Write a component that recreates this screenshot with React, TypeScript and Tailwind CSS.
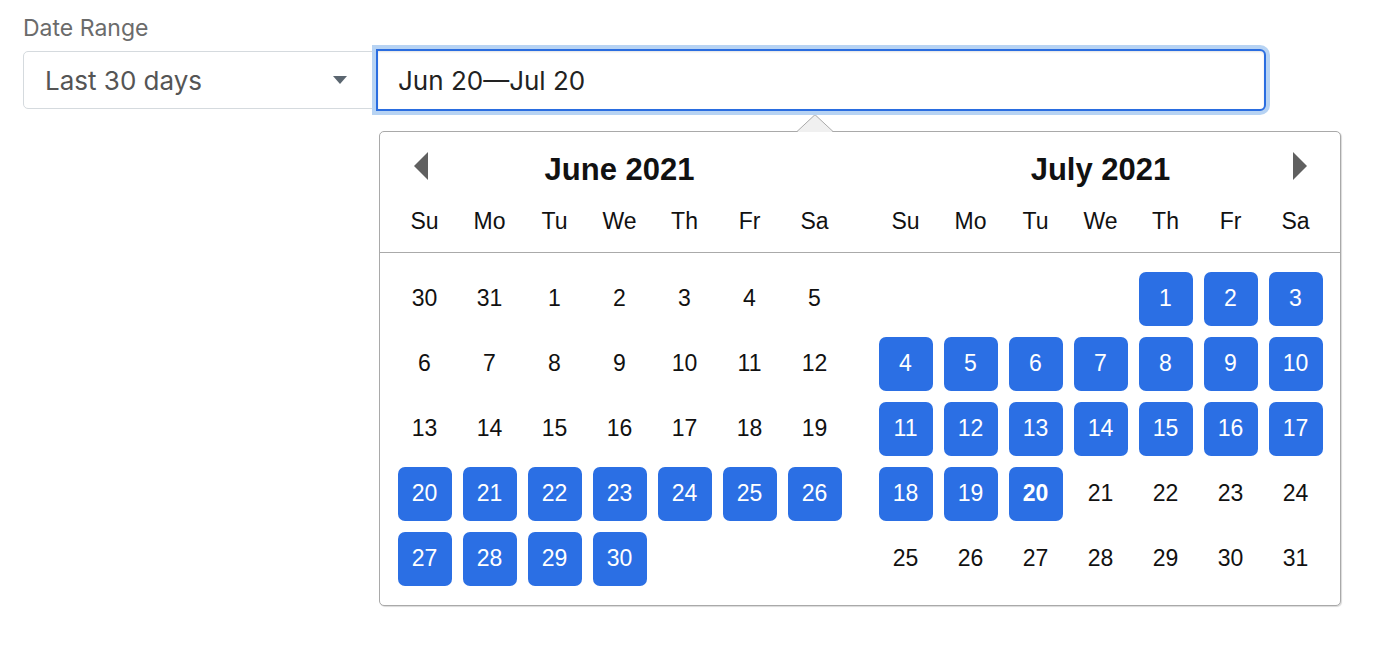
import { useState } from 'react';

// a cell is empty, a day of the month shown, or a day of the month before (out)
type Cell = { day: number; out?: boolean } | null;

const d = (day: number, out = false): Cell => ({ day, out });

// June 2021 starts on Tuesday, the two leading cells are May 30 and 31
const juneWeeks: Cell[][] = [
  [d(30, true), d(31, true), d(1), d(2), d(3), d(4), d(5)],
  [6, 7, 8, 9, 10, 11, 12].map(n => d(n)),
  [13, 14, 15, 16, 17, 18, 19].map(n => d(n)),
  [20, 21, 22, 23, 24, 25, 26].map(n => d(n)),
  [d(27), d(28), d(29), d(30), null, null, null],
];

const julyWeeks: Cell[][] = [
  [null, null, null, null, d(1), d(2), d(3)],
  [4, 5, 6, 7, 8, 9, 10].map(n => d(n)),
  [11, 12, 13, 14, 15, 16, 17].map(n => d(n)),
  [18, 19, 20, 21, 22, 23, 24].map(n => d(n)),
  [25, 26, 27, 28, 29, 30, 31].map(n => d(n)),
];

const weekdays = ['Su', 'Mo', 'Tu', 'We', 'Th', 'Fr', 'Sa'];

const calFont = { fontFamily: '"Liberation Sans", Arial, Helvetica, sans-serif' };

const LeftArrow = () => (
  <svg width="14" height="28" viewBox="0 0 14 28" className="block">
    <polygon points="14,0 0,14 14,28" fill="#606060" />
  </svg>
);

const RightArrow = () => (
  <svg width="14" height="28" viewBox="0 0 14 28" className="block">
    <polygon points="0,0 14,14 0,28" fill="#606060" />
  </svg>
);

interface MonthProps {
  title: string;
  arrow: 'prev' | 'next';
}

const MonthHeader = ({ title, arrow }: MonthProps) => (
  <div className="w-[455px]">
    <div className="grid h-[36px] grid-cols-[1fr_auto_1fr]">
      <div className="pl-[22px]">{arrow === 'prev' && <LeftArrow />}</div>
      <h2 className="text-[31px] font-bold leading-[36px] text-[#111]">{title}</h2>
      <div className="flex justify-end pr-[21px]">{arrow === 'next' && <RightArrow />}</div>
    </div>
    <div className="mt-[19px] grid grid-cols-7">
      {weekdays.map(w => (
        <div key={w} className="text-center text-[23px] leading-[28px] text-[#111]">
          {w}
        </div>
      ))}
    </div>
  </div>
);

interface GridProps {
  weeks: Cell[][];
  isSelected: (day: number) => boolean;
  strong?: number;
}

const MonthGrid = ({ weeks, isSelected, strong }: GridProps) => (
  <div className="grid w-[455px] grid-cols-7">
    {weeks.flat().map((c, i) => {
      const picked = c !== null && !c.out && isSelected(c.day);
      return (
        <div key={i} className="flex h-[65px] items-center justify-center">
          {c !== null && (
            <div
              className={`flex h-[54px] w-[54px] items-center justify-center rounded-[7px] text-[23px] ${
                picked ? 'bg-[#2b6fe4] text-white' : 'text-[#111]'
              } ${!c.out && c.day === strong ? 'font-bold' : ''}`}
            >
              {c.day}
            </div>
          )}
        </div>
      );
    })}
  </div>
);

export default function App() {
  const [range] = useState('Jun 20\u2014Jul 20');

  return (
    <div className="min-h-screen bg-white pl-[23px] pt-[14px]" style={{ fontFamily: 'Inter, "Noto Sans", sans-serif' }}>
      <label className="block text-[23px] leading-[28px] text-[#6b6b6b]">Date Range</label>

      <div className="mt-[7px] flex items-center">
        <div className="flex h-[58px] w-[353px] items-center rounded-l-[5px] border border-[#d5dade] bg-white pl-[21px] pr-[28px]">
          <span className="flex-1 text-[26px] text-[#555]">Last 30 days</span>
          <svg width="14" height="8" viewBox="0 0 14 8">
            <polygon points="0,0 14,0 7,8" fill="#5b6670" />
          </svg>
        </div>
        <div className="relative z-10 flex h-[62px] w-[890px] items-center rounded-r-[6px] border-2 border-[#2a6de0] bg-white pl-[20px] shadow-[inset_0_1px_2px_rgba(0,0,0,0.12),0_0_0_4px_#b7d3f3]">
          <span className="text-[26px] text-[#222]">{range}</span>
        </div>
      </div>

      <div
        className="relative ml-[356px] mt-[20px] w-[962px] rounded-[5px] border border-[#a9a9a9] bg-white shadow-[1px_1px_1px_rgba(0,0,0,0.15)]"
        style={calFont}
      >
        <svg width="36" height="18" viewBox="0 0 36 18" className="absolute left-[417px] top-[-18px]">
          <polygon points="0,18 18,0.5 36,18" fill="#f0f0f0" />
          <polyline points="0,17.5 18,0.7 36,17.5" fill="none" stroke="#a9a9a9" strokeWidth="1" />
        </svg>

        <div className="flex gap-[26px] border-b border-[#aaaaaa] px-[12px] pb-[17px] pt-[20px]">
          <MonthHeader title="June 2021" arrow="prev" />
          <MonthHeader title="July 2021" arrow="next" />
        </div>

        <div className="flex gap-[26px] px-[12px] pb-[14px] pt-[13px]">
          <MonthGrid weeks={juneWeeks} isSelected={n => n >= 20 && n <= 30} />
          <MonthGrid weeks={julyWeeks} isSelected={n => n <= 20} strong={20} />
        </div>
      </div>
    </div>
  );
}
